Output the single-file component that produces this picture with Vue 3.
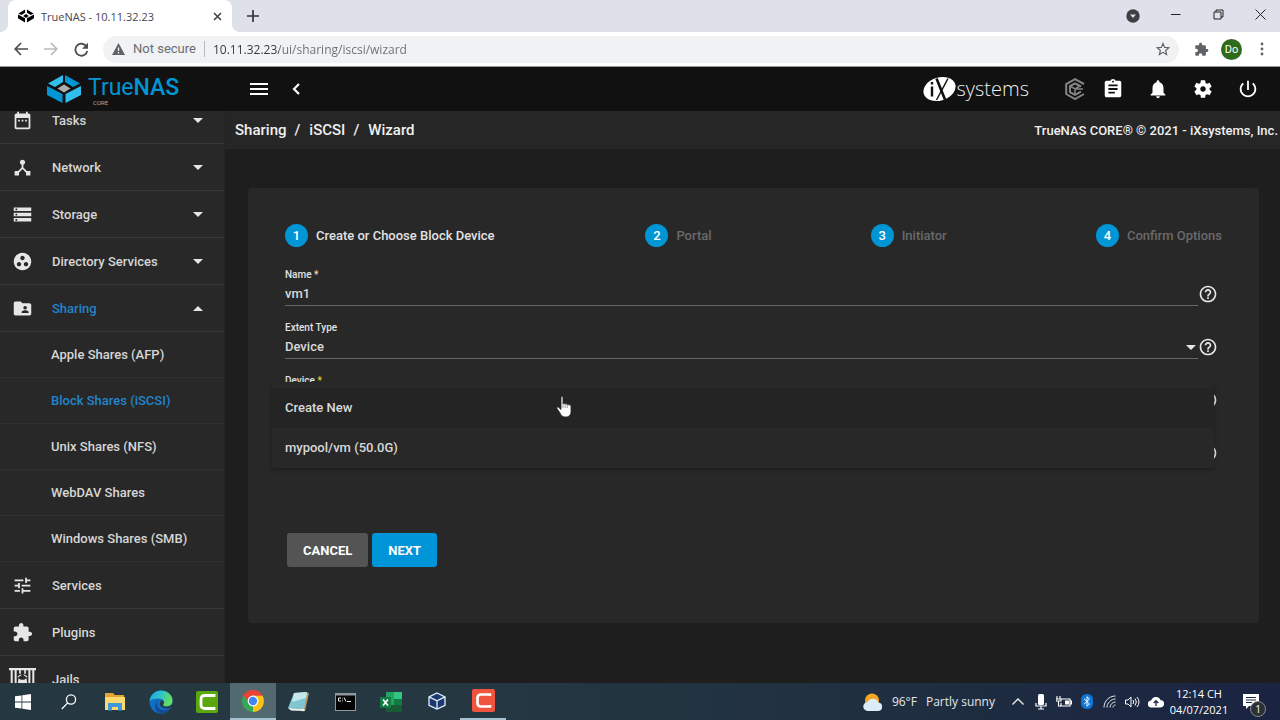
<script setup>
import { ref } from 'vue'

const address = ref('10.11.32.23/ui/sharing/iscsi/wizard')
const name = ref('vm1')
const extentType = ref('Device')
const device = ref('')

const paths = {
  calendar: 'M9 11H7v2h2v-2zm4 0h-2v2h2v-2zm4 0h-2v2h2v-2zm2-7h-1V2h-2v2H8V2H6v2H5c-1.11 0-1.99.9-1.99 2L3 20c0 1.1.89 2 2 2h14c1.1 0 2-.9 2-2V6c0-1.1-.9-2-2-2zm0 16H5V9h14v11z',
  hub: 'M17 16l-4-4V8.82C14.16 8.4 15 7.3 15 6c0-1.66-1.34-3-3-3S9 4.34 9 6c0 1.3.84 2.4 2 2.82V12l-4 4H3v5h5v-3.05l4-4.2 4 4.2V21h5v-5h-4z',
  storage: 'M2 20h20v-4H2v4zm2-3h2v2H4v-2zM2 4v4h20V4H2zm4 3H4V5h2v2zm-4 7h20v-4H2v4zm2-3h2v2H4v-2z',
  group: 'M12 2C6.48 2 2 6.48 2 12s4.48 10 10 10 10-4.48 10-10S17.52 2 12 2zM8 17.5c-1.38 0-2.5-1.12-2.5-2.5s1.12-2.5 2.5-2.5 2.5 1.12 2.5 2.5-1.12 2.5-2.5 2.5zM9.5 8c0-1.38 1.12-2.5 2.5-2.5s2.5 1.12 2.5 2.5-1.12 2.5-2.5 2.5S9.5 9.38 9.5 8zm6.5 9.5c-1.38 0-2.5-1.12-2.5-2.5s1.12-2.5 2.5-2.5 2.5 1.12 2.5 2.5-1.12 2.5-2.5 2.5z',
  folder: 'M20 6h-8l-2-2H4c-1.1 0-1.99.9-1.99 2L2 18c0 1.1.9 2 2 2h16c1.1 0 2-.9 2-2V8c0-1.1-.9-2-2-2zm-5 3c1.1 0 2 .9 2 2s-.9 2-2 2-2-.9-2-2 .9-2 2-2zm4 8h-8v-1c0-1.33 2.67-2 4-2s4 .67 4 2v1z',
  tune: 'M3 17v2h6v-2H3zM3 5v2h10V5H3zm10 16v-2h8v-2h-8v-2h-2v6h2zM7 9v2H3v2h4v2h2V9H7zm14 4v-2H11v2h10zm-6-4h2V7h4V5h-4V3h-2v6z',
  puzzle: 'M20.5 11H19V7c0-1.1-.9-2-2-2h-4V3.5C13 2.12 11.88 1 10.5 1S8 2.12 8 3.5V5H4c-1.1 0-1.99.9-1.99 2v3.8H3.5c1.49 0 2.7 1.21 2.7 2.7s-1.21 2.7-2.7 2.7H2V20c0 1.1.9 2 2 2h3.8v-1.5c0-1.49 1.21-2.7 2.7-2.7 1.49 0 2.7 1.21 2.7 2.7V22H17c1.1 0 2-.9 2-2v-4h1.5c1.38 0 2.5-1.12 2.5-2.5S21.88 11 20.5 11z',
  jail: 'M0 0h24v2H0zM1.500 2h1.800v22H1.500zM5 2h1.800v22H5zM17.200 2H19v22h-1.800zM20.700 2h1.800v22h-1.800zM9 2h1.500v3H9zM13.500 2H15v3h-1.500zM7.500 8A7.500 7.500 0 0 1 11 5.500v1A6 6 0 0 0 8.500 8.500zM16.500 8A7.500 7.500 0 0 0 13 5.500v1a6 6 0 0 1 2.500 2zM8.500 9l2 1.500h3l2-1.500.7 4.500a4.200 4.200 0 0 1-8.400 0z',
  assignment: 'M19 3h-4.18C14.4 1.84 13.3 1 12 1c-1.3 0-2.4.84-2.82 2H5c-1.1 0-2 .9-2 2v14c0 1.1.9 2 2 2h14c1.1 0 2-.9 2-2V5c0-1.1-.9-2-2-2zm-7 0c.55 0 1 .45 1 1s-.45 1-1 1-1-.45-1-1 .45-1 1-1zm2 14H7v-2h7v2zm3-4H7v-2h10v2zm0-4H7V7h10v2z',
  bell: 'M12 22c1.1 0 2-.9 2-2h-4c0 1.1.89 2 2 2zm6-6v-5c0-3.07-1.64-5.64-4.5-6.32V4c0-.83-.67-1.5-1.5-1.5s-1.500.67-1.500 1.500v.68C7.63 5.36 6 7.92 6 11v5l-2 2v1h16v-1l-2-2z',
  gear: 'M19.14 12.94c.04-.3.06-.61.06-.94 0-.32-.02-.64-.07-.94l2.03-1.58c.18-.14.23-.41.12-.61l-1.92-3.32c-.12-.22-.37-.29-.59-.22l-2.39.96c-.5-.38-1.03-.7-1.62-.94l-.36-2.54c-.04-.24-.24-.41-.48-.41h-3.84c-.24 0-.43.17-.47.41l-.36 2.54c-.59.24-1.13.57-1.62.94l-2.39-.96c-.22-.08-.47 0-.59.22L2.74 8.87c-.12.21-.08.47.12.61l2.03 1.58c-.05.3-.09.63-.09.94s.02.64.07.94l-2.03 1.58c-.18.14-.23.41-.12.61l1.92 3.32c.12.22.37.29.59.22l2.39-.96c.5.38 1.03.7 1.62.94l.36 2.54c.05.24.24.41.48.41h3.84c.24 0 .44-.17.47-.41l.36-2.54c.59-.24 1.13-.56 1.62-.94l2.39.96c.22.08.47 0 .59-.22l1.92-3.32c.12-.22.07-.47-.12-.61l-2.01-1.58zM12 15c-1.660 0-3-1.340-3-3s1.340-3 3-3 3 1.340 3 3-1.340 3-3 3z',
  power: 'M13 3h-2v10h2V3zm4.83 2.17l-1.42 1.42C17.99 7.86 19 9.81 19 12c0 3.87-3.13 7-7 7s-7-3.13-7-7c0-2.19 1.01-4.14 2.58-5.42L6.17 5.17C4.23 6.82 3 9.26 3 12c0 4.97 4.03 9 9 9s9-4.03 9-9c0-2.74-1.23-5.18-3.17-6.83z',
  help: 'M11 18h2v-2h-2v2zm1-16C6.48 2 2 6.48 2 12s4.48 10 10 10 10-4.48 10-10S17.52 2 12 2zm0 18c-4.41 0-8-3.59-8-8s3.59-8 8-8 8 3.59 8 8-3.59 8-8 8zm0-14c-2.21 0-4 1.79-4 4h2c0-1.1.9-2 2-2s2 .9 2 2c0 2-3 1.75-3 5h2c0-2.25 3-2.5 3-5 0-2.21-1.79-4-4-4z'
}

const topMenu = [
  { label: 'Tasks', icon: 'calendar' },
  { label: 'Network', icon: 'hub' },
  { label: 'Storage', icon: 'storage' },
  { label: 'Directory Services', icon: 'group' },
  {
    label: 'Sharing', icon: 'folder', open: true,
    children: ['Apple Shares (AFP)', 'Block Shares (iSCSI)', 'Unix Shares (NFS)', 'WebDAV Shares', 'Windows Shares (SMB)']
  },
  { label: 'Services', icon: 'tune', leaf: true },
  { label: 'Plugins', icon: 'puzzle', leaf: true },
  { label: 'Jails', icon: 'jail', leaf: true }
]
const activeChild = 'Block Shares (iSCSI)'
const steps = ['Create or Choose Block Device', 'Portal', 'Initiator', 'Confirm Options']
const crumbs = ['Sharing', 'iSCSI', 'Wizard']
const devices = ['Create New', 'mypool/vm (50.0G)']
const actions = [
  { label: 'Task manager', icon: 'assignment' },
  { label: 'Notifications', icon: 'bell' },
  { label: 'Settings', icon: 'gear' },
  { label: 'Power', icon: 'power' }
]
</script>

<template>
  <div class="screen">
    <header class="tabs">
      <div class="tab">
        <svg class="favicon" viewBox="0 0 34 28" aria-hidden="true">
          <path d="M15 0v7l-8 5-6-3.500zM19 0v7l8 5 6-3.500zM0 11l15 8v9L0 19zM34 11l-15 8v9l15-9zM17 10l6 4-6 4-6-4z" />
        </svg>
        <span class="tab-title">TrueNAS - 10.11.32.23</span>
        <button class="plain" aria-label="Close tab">
          <svg width="9" height="9" viewBox="0 0 9 9"><path d="M1 1l7 7M8 1L1 8" stroke="#444" stroke-width="1.600" /></svg>
        </button>
      </div>
      <button class="plain new-tab" aria-label="New tab">
        <svg width="12" height="12" viewBox="0 0 12 12"><path d="M6 0v12M0 6h12" stroke="#333" stroke-width="1.700" /></svg>
      </button>
      <div class="window-buttons">
        <button class="plain search-tabs" aria-label="Search tabs">
          <svg width="14" height="14" viewBox="0 0 14 14"><circle cx="7" cy="7" r="6.700" fill="#3c4043" /><path d="M4 5.500h6L7 9z" fill="#dee1e9" /></svg>
        </button>
        <button class="plain" aria-label="Minimize">
          <svg width="11" height="11" viewBox="0 0 11 11"><path d="M1 5.500h9.500" stroke="#222" /></svg>
        </button>
        <button class="plain" aria-label="Restore">
          <svg width="11" height="11" viewBox="0 0 11 11" fill="none" stroke="#222"><path d="M1 3h7v7H1zM3 3V1h7v7H8" /></svg>
        </button>
        <button class="plain" aria-label="Close">
          <svg width="11" height="11" viewBox="0 0 11 11"><path d="M.500.500l10 10M10.500.500l-10 10" stroke="#222" /></svg>
        </button>
      </div>
    </header>

    <div class="toolbar">
      <button class="plain" aria-label="Back">
        <svg width="14" height="14" viewBox="0 0 14 14" fill="none" stroke="#4a4d51" stroke-width="1.700"><path d="M14 7H1.500M7 1L1.200 7 7 13" /></svg>
      </button>
      <button class="plain" aria-label="Forward">
        <svg width="14" height="14" viewBox="0 0 14 14" fill="none" stroke="#b9bbbe" stroke-width="1.700"><path d="M0 7h12.500M7 1l5.800 6L7 13" /></svg>
      </button>
      <button class="plain" aria-label="Reload">
        <svg width="15" height="15" viewBox="0 0 15 15"><path d="M12.500 4.500A6 6 0 1 0 13.300 9" fill="none" stroke="#4a4d51" stroke-width="1.800" /><path d="M14 .800v6H8z" fill="#4a4d51" /></svg>
      </button>
      <div class="omnibox">
        <svg width="13" height="12" viewBox="0 0 13 12"><path d="M6.500 0L13 12H0z" fill="#5f6368" /><path d="M6.500 4.500v3.500M6.500 9v1.500" stroke="#f1f3f4" stroke-width="1.300" /></svg>
        <span class="secure">Not secure</span>
        <input v-model="address" class="address" aria-label="Address" />
        <button class="plain" aria-label="Bookmark">
          <svg width="14" height="14" viewBox="0 0 24 24"><path d="M12 2.500l2.800 6.700 7.200.600-5.500 4.700 1.700 7L12 17.700l-6.200 3.800 1.700-7L2 9.800l7.200-.600z" fill="none" stroke="#5f6368" stroke-width="2" /></svg>
        </button>
      </div>
      <button class="plain" aria-label="Extensions">
        <svg width="15" height="15" viewBox="0 0 24 24" fill="#5f6368"><path :d="paths.puzzle" /></svg>
      </button>
      <button class="avatar">Do</button>
      <button class="plain" aria-label="Browser menu">
        <svg width="4" height="14" viewBox="0 0 4 14" fill="#5f6368"><circle cx="2" cy="2" r="1.400" /><circle cx="2" cy="7" r="1.400" /><circle cx="2" cy="12" r="1.400" /></svg>
      </button>
    </div>

    <div class="app-header">
      <a class="brand" href="#" aria-label="TrueNAS CORE">
        <svg width="34" height="28" viewBox="0 0 34 28" aria-hidden="true">
          <path d="M16 0v7l-8 5-7-3.500z" fill="#31beec" /><path d="M18 0v7l8 5 7-3.500z" fill="#0095d5" />
          <path d="M0 11l15.500 8v9L0 20z" fill="#0095d5" /><path d="M34 11l-15.500 8v9L34 20z" fill="#31beec" />
          <path d="M17 9.500l6.500 4-6.500 4-6.500-4z" fill="#aeadae" />
        </svg>
        <span class="brand-text">
          <span class="brand-name">True<b>NAS</b></span>
          <span class="brand-sub">CORE</span>
        </span>
      </a>
      <button class="plain" aria-label="Toggle menu">
        <svg width="18" height="12" viewBox="0 0 18 12" fill="#fff"><path d="M0 0h18v2H0zM0 5h18v2H0zM0 10h18v2H0z" /></svg>
      </button>
      <button class="plain collapse" aria-label="Collapse menu">
        <svg width="8" height="12" viewBox="0 0 8 12" fill="none" stroke="#fff" stroke-width="2.200"><path d="M7 1L2 6l5 5" /></svg>
      </button>
      <a class="ix" href="#" aria-label="iXsystems">
        <svg width="33" height="26" viewBox="0 0 33 26" aria-hidden="true">
          <ellipse cx="16.500" cy="13" rx="16.500" ry="11.500" transform="rotate(-18 16.500 13)" fill="#fff" />
          <path d="M9 10.500v10M9 6v2.500" stroke="#111" stroke-width="2.400" />
          <path d="M13.500 2.500L22 23.500" stroke="#111" stroke-width="2.600" /><path d="M25 2.500L13.500 24" stroke="#111" stroke-width="1.500" />
        </svg>
        <span>systems</span>
      </a>
      <div class="actions">
        <button class="plain" aria-label="TrueCommand">
          <svg width="20" height="22" viewBox="0 0 20 22" fill="none" stroke="#858585" stroke-width="2"><path d="M19 6L10 1.200 1.200 6v10l8.800 5 9-5M16 8.500l-6-3.200-5 2.800v6l5 2.800 6-3.200" /><path d="M5 8l5 3 5-3M10 11v5M10 11h8" stroke-width="1.500" /></svg>
        </button>
        <button v-for="a in actions" :key="a.label" class="plain" :aria-label="a.label">
          <svg width="22" height="22" viewBox="0 0 24 24" fill="#fff"><path :d="paths[a.icon]" /></svg>
        </button>
      </div>
    </div>

    <div class="body">
      <nav class="sidebar">
        <ul>
          <li v-for="m in topMenu" :key="m.label">
            <a href="#" class="item" :class="{ active: m.open }">
              <svg class="item-icon" :class="{ wide: m.icon === 'jail' }" viewBox="0 0 24 24" aria-hidden="true"><path :d="paths[m.icon]" /></svg>
              <span>{{ m.label }}</span>
              <svg v-if="!m.leaf" class="caret" viewBox="0 0 10 5" aria-hidden="true"><path :d="m.open ? 'M0 5l5-5 5 5z' : 'M0 0l5 5 5-5z'" /></svg>
            </a>
            <ul v-if="m.children">
              <li v-for="c in m.children" :key="c"><a href="#" class="sub" :class="{ active: c === activeChild }">{{ c }}</a></li>
            </ul>
          </li>
        </ul>
      </nav>

      <main>
        <div class="crumb-bar">
          <div class="crumbs">
            <template v-for="(c, i) in crumbs" :key="c">
              <span v-if="i" class="slash">/</span><a href="#">{{ c }}</a>
            </template>
          </div>
          <span class="copyright">TrueNAS CORE® © 2021 - iXsystems, Inc.</span>
        </div>

        <form class="card" @submit.prevent>
          <ol class="steps">
            <li v-for="(s, i) in steps" :key="s" :class="{ current: i === 0 }"><span class="num">{{ i + 1 }}</span>{{ s }}</li>
          </ol>

          <div class="fields">
            <div class="field">
              <div class="control">
                <label for="name">Name <i>*</i></label>
                <input id="name" v-model="name" />
              </div>
              <button type="button" class="plain" aria-label="Help"><svg width="20" height="20" viewBox="0 0 24 24"><path :d="paths.help" /></svg></button>
            </div>
            <div class="field">
              <div class="control">
                <label for="extent">Extent Type</label>
                <select id="extent" v-model="extentType"><option>Device</option></select>
                <svg class="arrow" viewBox="0 0 10 5" aria-hidden="true"><path d="M0 0l5 5 5-5z" /></svg>
              </div>
              <button type="button" class="plain" aria-label="Help"><svg width="20" height="20" viewBox="0 0 24 24"><path :d="paths.help" /></svg></button>
            </div>
            <div class="field">
              <div class="control">
                <label for="device">Device <i class="focus">*</i></label>
                <select id="device" v-model="device"><option v-for="d in devices" :key="d">{{ d }}</option></select>
              </div>
              <button type="button" class="plain" aria-label="Help"><svg width="20" height="20" viewBox="0 0 24 24"><path :d="paths.help" /></svg></button>
            </div>
            <div class="field">
              <div class="control"></div>
              <button type="button" class="plain" aria-label="Help"><svg width="20" height="20" viewBox="0 0 24 24"><path :d="paths.help" /></svg></button>
            </div>
            <ul class="menu" role="listbox" aria-label="Device">
              <li v-for="(d, i) in devices" :key="d" role="option" :class="{ hover: i === 0 }" :aria-selected="i === 0">{{ d }}</li>
            </ul>
            <svg class="pointer" viewBox="0 0 16 22" aria-hidden="true">
              <path d="M5 1.500c0-1.300 2-1.300 2 0V8c0-1 2-1 2 .300 0-1 2-1 2 .500 0-1 2-1 2 .500 0-.800 2-.600 2 .700v5c0 4-2 6-5.500 6-3 0-4.500-1.500-5.500-4l-3-4.500c-.700-1.300.800-2 1.800-1L5 13.500z" fill="#fff" stroke="#222" stroke-width=".8" />
              <path d="M7 8v4M9.200 8.500V12M11.300 9v3" stroke="#777" stroke-width=".7" />
            </svg>
          </div>

          <div class="buttons">
            <button type="button" class="btn">CANCEL</button>
            <button type="button" class="btn primary">NEXT</button>
          </div>
        </form>
      </main>
    </div>

    <footer class="taskbar">
      <button aria-label="Start"><svg width="16" height="16" viewBox="0 0 16 16" fill="#fff"><path d="M0 2.300L6.500 1.400v6.200H0zM7.300 1.200L16 0v7.600H7.300zM0 8.400h6.500v6.200L0 13.700zM7.300 8.400H16V16l-8.700-1.200z" /></svg></button>
      <button aria-label="Search"><svg width="16" height="16" viewBox="0 0 16 16" fill="none" stroke="#fff" stroke-width="1.300"><circle cx="10" cy="5.500" r="4.600" /><path d="M6.700 8.900L.800 15" /></svg></button>
      <button aria-label="File Explorer"><svg width="20" height="18" viewBox="0 0 20 18"><path d="M0 0h8l2 2h9v5H0z" fill="#e4a431" /><path d="M0 4h20v13H0z" fill="#fbd870" /><path d="M3 10h14v7.500h-4V14H7v3.500H3z" fill="#3f97dc" /></svg></button>
      <button aria-label="Edge">
        <svg width="24" height="24" viewBox="0 0 24 24">
          <defs><linearGradient id="edge-top" x1="0" y1="0" x2="1" y2=".4"><stop offset="0" stop-color="#1b9de2" /><stop offset=".5" stop-color="#2dc3c8" /><stop offset="1" stop-color="#65dc62" /></linearGradient></defs>
          <circle cx="12" cy="12" r="11.500" fill="#0f6fc4" />
          <path d="M.600 11C1.500 4.500 6.500.500 12 .500c6.500 0 11.500 4.500 11.500 10 0 4-3 6-6 6-2.500 0-4-.800-3.200-2 2.200-3-.300-6-4.300-6-4.500 0-8 1-9.400 2.500z" fill="url(#edge-top)" />
          <path d="M9.500 9.500c-3.500 3.500-1 9.500 4 10.500 3 .600 6-.400 8.500-2.500-2 4-5.500 6-10 6C6 23 4 14 9.500 9.500z" fill="#164a93" />
          <path d="M13.500 10c1.500 1.500 1.500 3.500.500 4.800-.800 2 5 3.200 9.500-.800l-1.500 3.500c-4 2-10 1-11-2.500-.600-2 .500-4.300 2.500-5z" fill="#253a45" />
        </svg>
      </button>
      <button aria-label="Camtasia"><svg width="22" height="22" viewBox="0 0 22 22"><rect width="22" height="22" rx="2" fill="#5aa70e" /><path d="M18 6V4.500H9Q5 4.500 5 8.500v5q0 4 4 4h9V16" fill="none" stroke="#fff" stroke-width="2.800" /></svg></button>
      <button class="current" aria-label="Chrome">
        <svg width="22" height="22" viewBox="0 0 22 22">
          <path d="M11 11L1.500 5.500A11 11 0 0 1 20.500 5.500z" fill="#e94335" /><path d="M11 11L1.500 5.500A11 11 0 0 0 11 22l4-8z" fill="#34a853" /><path d="M11 11L11 22A11 11 0 0 0 20.500 5.500H11z" fill="#fbc116" />
          <path d="M1.500 5.500L7 15l4-4V5.500z" fill="#34a853" /><path d="M1.500 5.500A11 11 0 0 1 20.500 5.500H11L6 11z" fill="#e94335" />
          <circle cx="11" cy="11" r="5.400" fill="#fff" /><circle cx="11" cy="11" r="4.200" fill="#4285f4" />
        </svg>
      </button>
      <button aria-label="Notepad"><svg width="22" height="21" viewBox="0 0 22 21"><path d="M15 1l6 1-4 18-3 .500z" fill="#b99a67" /><path d="M6 2l13-1-3 17-16-1z" fill="#7fc6d2" /><path d="M6 2l13-1-1 6-14 4z" fill="#c4e8ec" /><path d="M0 17l16 1 1 2-14-.500z" fill="#eef5f5" /></svg></button>
      <button aria-label="Command Prompt"><svg width="21" height="18" viewBox="0 0 21 18"><path d="M0 0h21v18H0z" fill="#8e979b" /><path d="M1 2.500h19V17H1z" fill="#050505" /><path d="M6 5H3.500v3H6M7.500 5.500v.8M7.500 7.500v.800M9 4.500l2 4M12 8.500h4" fill="none" stroke="#eee" /></svg></button>
      <button aria-label="Excel">
        <svg width="22" height="20" viewBox="0 0 22 20"><path d="M6 0h8v20H6z" fill="#21a366" /><path d="M14 0h8v7h-8z" fill="#33c481" /><path d="M14 7h8v6h-8z" fill="#107c41" /><path d="M6 13h16v7H6z" fill="#185c37" /><path d="M0 5h11v11H0z" fill="#107c41" /><path d="M3 7.500l5 6M8 7.500l-5 6" stroke="#fff" stroke-width="1.700" /></svg>
      </button>
      <button aria-label="VirtualBox"><svg width="20" height="21" viewBox="0 0 20 21"><path d="M10 1l9 4.500v9L10 20l-9-5.500v-9z" fill="#1b3b6e" /><path d="M10 2l8 3.800v8.500L10 18l-8-3.700V5.800zM2 5.800l8 4 8-4M10 9.800V18" fill="none" stroke="#e6eefa" stroke-width="1.300" /></svg></button>
      <button class="running" aria-label="Recorder"><svg width="23" height="23" viewBox="0 0 23 23"><rect width="23" height="23" rx="2" fill="#f0543f" /><path d="M18 7V5.500H9Q5.500 5.500 5.500 9v5q0 3.500 3.500 3.500h9V16" fill="none" stroke="#fff" stroke-width="2.600" /></svg></button>

      <div class="tray">
        <button class="weather">
          <svg width="20" height="18" viewBox="0 0 20 18" aria-hidden="true"><circle cx="9" cy="7.500" r="7" fill="#f6a823" /><path d="M5 18a4.500 4.500 0 0 1-.500-9A6 6 0 0 1 15.500 9.500a4.300 4.300 0 0 1 0 8.500z" fill="#dcecf8" /></svg>
          <span>96°F</span><span>Partly sunny</span>
        </button>
        <button aria-label="Show hidden icons"><svg width="12" height="7" viewBox="0 0 12 7" fill="none" stroke="#eee" stroke-width="1.300"><path d="M.500 6.500L6 1l5.500 5.500" /></svg></button>
        <button aria-label="Microphone"><svg width="12" height="16" viewBox="0 0 12 16"><rect x="3" y="0" width="6" height="11" rx="1.500" fill="#fff" /><path d="M1 9v3h10V9M6 12v3M3 15h6" fill="none" stroke="#fff" stroke-width="1.200" /></svg></button>
        <button aria-label="Battery"><svg width="16" height="12" viewBox="0 0 16 12"><path d="M5 3h9v7H5V7M14 5h1.500v3H14" fill="none" stroke="#fff" stroke-width="1.200" /><path d="M9 4.500h4v4H9z" fill="#fff" /><path d="M1 0v3M4 0v3M0 3h5v2H0zM2.500 5v5H5" fill="none" stroke="#fff" stroke-width="1.100" /></svg></button>
        <button aria-label="Bluetooth"><svg width="12" height="15" viewBox="0 0 12 15"><rect width="12" height="15" rx="5.500" fill="#0d74d8" /><path d="M3 4.800l5.500 5L6 12.300V2.700l2.500 2.400L3 10.200" fill="none" stroke="#fff" /></svg></button>
        <button aria-label="Network"><svg width="13" height="13" viewBox="0 0 13 13" fill="none" stroke="#dfe3ea"><path d="M1 12.500C1 6 6 1 12.500 1M4 12.500C4 8 8 4 12.500 4M7 12.500C7 9.500 9.500 7 12.500 7M10 12.500c0-1.500 1-2.500 2.500-2.500" /></svg></button>
        <button aria-label="Volume"><svg width="15" height="12" viewBox="0 0 15 12" fill="none" stroke="#fff"><path d="M.500 4h2.500l3-3v10l-3-3H.500zM8 4q1.500 2 0 4M10 2.500q2.800 3.500 0 7M12 1q4 5 0 10" /></svg></button>
        <button aria-label="Cloud sync"><svg width="16" height="12" viewBox="0 0 16 12"><path d="M3.500 11.500a3.500 3.500 0 0 1-.300-7A5 5 0 0 1 12.500 4a3.700 3.700 0 0 1-.200 7.500z" fill="#fff" /><path d="M8 10V5M5.700 7L8 4.700 10.300 7" fill="none" stroke="#1c2947" stroke-width="1.300" /></svg></button>
        <button class="clock"><span>12:14 CH</span><span>04/07/2021</span></button>
        <button class="notice" aria-label="Action Center"><svg width="16" height="15" viewBox="0 0 16 15"><path d="M0 0h16v12H6l-3 3v-3H0z" fill="#fff" /><path d="M3 3.500h10M3 6h10M3 8.500h6" stroke="#1c2947" stroke-width="1.100" /></svg><span class="badge">1</span></button>
      </div>
    </footer>
  </div>
</template>

<style>
body { margin: 0; background: #1e1e1e; }
</style>

<style scoped>
.screen { height: 100vh; display: flex; flex-direction: column; overflow: hidden; font-family: Roboto, "Liberation Sans", sans-serif; font-size: 13px; color: #e2e2e2; }
.screen * { box-sizing: border-box; }
button, input, select { font: inherit; color: inherit; margin: 0; padding: 0; border: 0; background: none; outline: 0; }
a { color: inherit; text-decoration: none; }
ul, ol { margin: 0; padding: 0; list-style: none; }
svg { display: block; flex: none; }
.plain { display: grid; place-items: center; flex: none; }

.tabs { flex: none; height: 32px; display: flex; align-items: center; background: #dee1e9; padding-left: 8px; }
.tab { position: relative; width: 224px; height: 32px; display: flex; align-items: center; padding: 0 10px; background: #fff; border-radius: 8px 8px 0 0; color: #45484d; }
.tab::before, .tab::after { content: ""; position: absolute; bottom: 0; width: 8px; height: 8px; }
.tab::before { left: -8px; background: radial-gradient(circle at 0 0, #dee1e9 8px, #fff 8px); }
.tab::after { right: -8px; background: radial-gradient(circle at 100% 0, #dee1e9 8px, #fff 8px); }
.favicon { width: 16px; height: 14px; margin-right: 7px; }
.tab-title { flex: 1; font-family: "Open Sans", sans-serif; font-size: 11px; }
.new-tab { margin-left: 15px; }
.window-buttons { margin-left: auto; display: flex; padding-bottom: 4px; }
.window-buttons .plain { width: 43px; }
.window-buttons .search-tabs { padding-top: 4px; width: 42px; }
.window-buttons .plain:last-child { width: 40px; }

.toolbar { flex: none; height: 35px; display: flex; align-items: center; background: #fff; border-bottom: 1px solid #999; padding: 0 8px 0 6px; }
.toolbar > .plain { width: 30px; }
.omnibox { flex: 1; height: 27px; margin: 0 7px; padding: 0 9px; display: flex; align-items: center; background: #f0f2f4; border-radius: 14px; color: #6a6d72; }
.secure { margin: 0 8px; padding-right: 8px; border-right: 1px solid #b5b8bc; line-height: 16px; }
.address { flex: 1; font-family: "Open Sans", sans-serif; font-size: 12px; background: linear-gradient(90deg, #33363a 66px, #6a6d72 66px); -webkit-background-clip: text; background-clip: text; color: transparent; }
.avatar { width: 21px; height: 21px; margin: 0 5px; border-radius: 50%; background: #2f6b1d; color: #fff; font-size: 11px; }
.toolbar > .avatar ~ .plain { width: 20px; margin-left: 5px; }

.app-header { flex: none; height: 44px; display: flex; align-items: center; background: #111; padding-right: 21px; }
.brand { width: 250px; display: flex; align-items: center; padding-left: 47px; gap: 7px; color: #0095d5; }
.brand-text { display: flex; flex-direction: column; padding-top: 4px; }
.brand-name { font-size: 23px; line-height: 24px; }
.brand-name b { font-weight: 500; }
.brand-sub { padding-left: 5px; font-size: 6px; line-height: 6px; color: #aaa; }
.collapse { margin-left: 24px; }
.ix { margin-left: auto; display: flex; align-items: center; gap: 1px; margin-right: 36px; color: #eee; font-family: "Open Sans", sans-serif; font-weight: 300; font-size: 20px; line-height: 24px; }
.actions { display: flex; gap: 23px; }
.actions .plain:first-child { margin-right: -6px; }

.body { flex: 1; min-height: 0; display: flex; background: #1e1e1e; }
.sidebar { flex: none; width: 225px; overflow: hidden; background: #282828; border-right: 1px solid #242424; font-weight: 500; color: #d6d6d6; }
.sidebar > ul { margin-top: -14px; }
.item { height: 47px; display: flex; align-items: center; border-bottom: 1px solid #383838; padding: 0 21px 0 12px; }
.item-icon { width: 21px; height: 21px; margin-right: 19px; fill: #e6e6e6; }
.item-icon.wide { width: 27px; height: 27px; margin: 4px 16px 0 -3px; }
.caret { width: 10px; height: 5px; margin-left: auto; fill: #e6e6e6; }
.sub { height: 46px; display: flex; align-items: center; padding-left: 51px; border-bottom: 1px solid #303030; }
.item.active span, .sub.active { color: #2185cc; }

main { flex: 1; min-width: 0; }
.crumb-bar { height: 38px; display: flex; align-items: center; justify-content: space-between; padding: 0 2px 0 10px; background: #262626; font-weight: 500; color: #f0f0f0; }
.crumbs { display: flex; font-size: 15px; }
.slash { margin: 0 9px 0 8px; }
.card { margin: 39px 21px 0 23px; padding: 36px 37px 56px; border-radius: 4px; background: #282828; }
.steps { display: grid; grid-template-columns: 8fr 5fr 5fr auto; line-height: 23px; color: #6a6a6a; font-weight: 500; }
.steps li { display: flex; gap: 8px; }
.steps .current { color: #e2e2e2; }
.num { width: 23px; height: 23px; border-radius: 50%; background: #0095d5; color: #fff; text-align: center; }

.fields { position: relative; margin-top: 20px; padding-right: 4px; }
.field { height: 53px; display: flex; }
.control { position: relative; flex: 1; display: flex; flex-direction: column; height: 39px; border-bottom: 1px solid #666; }
.control label { font-size: 10px; line-height: 16px; font-weight: 500; }
.control i { font-style: normal; color: #f3d9b4; }
.control .focus { color: #d4dd2a; }
.control input, .control select { height: 20px; appearance: none; font-weight: 500; color: #d8d8d8; }
.arrow { position: absolute; right: 2px; top: 25px; width: 10px; height: 5px; fill: #e6e6e6; }
.field .plain { width: 20px; height: 20px; margin-top: 17px; }
.field .plain path { fill: #e6e6e6; }
.menu { position: absolute; top: 115px; left: -13px; right: 8px; padding-top: 6px; background: #282828; box-shadow: 0 2px 4px rgba(0, 0, 0, .3); }
.menu li { height: 40px; line-height: 40px; padding-left: 13px; font-weight: 500; color: #d8d8d8; }
.menu .hover { background: #242424; }
.pointer { position: absolute; left: 271px; top: 129px; width: 16px; height: 22px; }

.buttons { display: flex; gap: 4px; margin: 54px 0 0 2px; }
.btn { height: 34px; padding: 0 16px; border-radius: 3px; background: #545454; color: #fff; font-weight: 700; }
.btn.primary { background: #0095d9; }

.taskbar { flex: none; height: 37px; display: flex; background: linear-gradient(90deg, #253842 35%, #203040 65%, #1a2442); color: #fff; }
.taskbar button { display: grid; place-items: center; }
.taskbar > button { width: 46px; }
.taskbar > button:first-child { width: 45px; }
.taskbar > button:nth-child(2) { width: 47px; }
.taskbar .current { background: #536970; border-bottom: 2px solid #a5c2d3; }
.taskbar .running { border-bottom: 2px solid #a5c2d3; }
.tray { margin-left: auto; display: flex; align-items: center; font-family: "Open Sans", sans-serif; }
.tray button { width: 23px; height: 37px; }
.tray .weather { width: auto; display: flex; align-items: center; gap: 9px; font-size: 12px; margin-right: 11px; color: #e3e6ea; }
.tray .clock { width: 64px; display: flex; flex-direction: column; align-items: center; justify-content: center; font-size: 11px; line-height: 16px; }
.tray .notice { position: relative; width: 40px; margin-right: 9px; }
.badge { position: absolute; right: 5px; bottom: 3px; width: 16px; height: 16px; border: 1px solid #888; border-radius: 50%; background: #2b2f38; font-size: 10px; line-height: 14px; }
</style>
